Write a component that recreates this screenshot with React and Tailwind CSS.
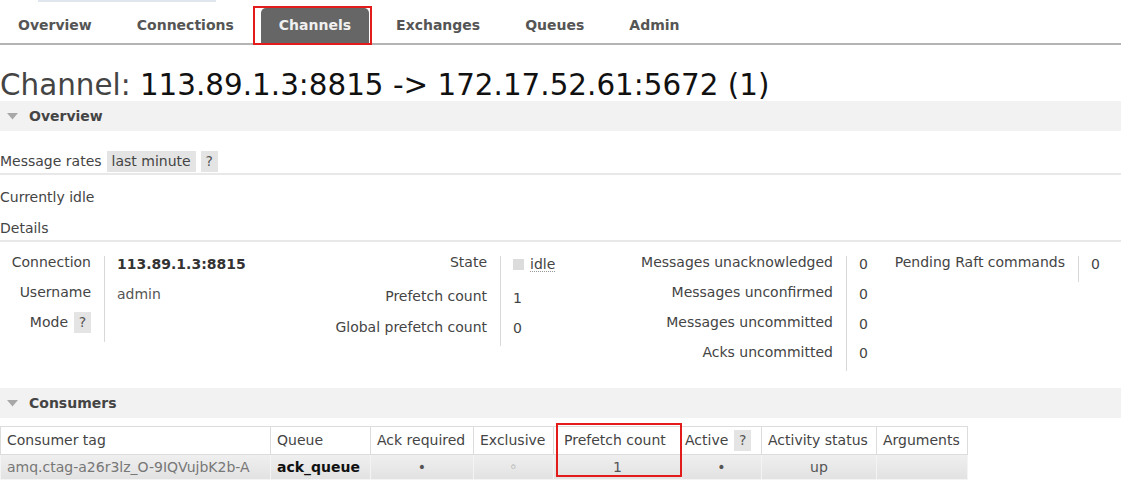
import React from "react";

function Triangle() {
  return (
    <svg width="11" height="7" viewBox="0 0 11 7" className="mr-[11px] ml-[7px]">
      <polygon points="0,0 11,0 5.5,6.5" fill="#a8a8a8" />
    </svg>
  );
}

function SectionHeader({ title }) {
  return (
    <div className="flex items-center h-[30px] bg-[#f2f2f2]">
      <Triangle />
      <span className="font-bold text-[14px] text-[#444]">{title}</span>
    </div>
  );
}

function Help({ className = "" }) {
  return (
    <span className={`inline-flex items-center justify-center bg-[#e4e4e4] text-[#555] w-[17px] h-[21px] ${className}`}>?</span>
  );
}

function Labels({ width, rows, gaps }) {
  return (
    <div className="flex flex-col items-end pr-[13px] pb-[14px] shrink-0" style={{ width }}>
      {rows.map((r, i) => (
        <div key={i} className="h-[12px] leading-[12px] flex items-center whitespace-nowrap" style={{ marginTop: i === 0 ? 0 : gaps[i - 1] }}>
          {r}
        </div>
      ))}
    </div>
  );
}

function Values({ width, rows, gaps }) {
  return (
    <div className="flex flex-col border-l border-[#d8d8d8] pl-[12px] pt-[2px] pb-[12px] shrink-0" style={{ width }}>
      {rows.map((r, i) => (
        <div key={i} className="h-[12px] leading-[12px] flex items-center whitespace-nowrap" style={{ marginTop: i === 0 ? 0 : gaps[i - 1] }}>
          {r}
        </div>
      ))}
    </div>
  );
}

export default function App() {
  const tabs = ["Overview", "Connections", "Channels", "Exchanges", "Queues", "Admin"];
  const th = "border border-[#dcdcdc] bg-white font-normal text-left px-[6px] h-[28px] whitespace-nowrap";
  const td = "border border-[#f4f4f4] px-[6px] h-[25px] whitespace-nowrap";

  return (
    <div className="w-[1121px] h-[481px] overflow-hidden bg-white text-[14px] text-[#444] font-['DejaVu_Sans',sans-serif]">
      <div className="h-[3px]">
        <div className="ml-[38px] w-[178px] h-[2px] bg-[#dfe6ee]" />
      </div>

      <ul className="flex gap-[9px] pt-[5px] border-b-2 border-[#b4b4b4]">
        {tabs.map((t) => (
          <li
            key={t}
            className={`relative h-[35px] px-[18px] flex items-center font-bold rounded-t-[5px] ${
              t === "Channels" ? "bg-[#666] text-[#f0f0f0]" : "text-[#555]"
            }`}
          >
            {t}
            {t === "Channels" && (
              <span className="absolute left-[-8px] right-[-3px] top-[-2px] bottom-[-2px] border-2 border-[#e41b1b]" />
            )}
          </li>
        ))}
      </ul>

      <h1 className="mt-[25px] leading-[31px] text-[29.4px] font-normal whitespace-nowrap">
        <span className="text-[#444]">Channel: </span>
        <span className="text-[#111]">113.89.1.3:8815 -&gt; 172.17.52.61:5672 (1)</span>
      </h1>

      <SectionHeader title="Overview" />

      <div className="pb-[2px] border-b-2 border-[#e8e8e8]">
        <div className="mt-[20px] h-[20px] flex items-center">
          <span className="mr-[5px]">Message rates</span>
          <span className="bg-[#e4e4e4] px-[5px] h-[21px] flex items-center">last minute</span>
          <Help className="ml-[5px]" />
        </div>
      </div>

      <div className="mt-[12px] leading-[20px]">Currently idle</div>
      <div className="mt-[11px] leading-[20px] pb-[2px] border-b-2 border-[#e8e8e8]">Details</div>

      <div className="flex items-start mt-[14px]">
        <Labels
          width={104}
          gaps={[18, 18]}
          rows={["Connection", "Username", <span className="flex items-center">Mode<Help className="ml-[6px]" /></span>]}
        />
        <Values
          width={226}
          gaps={[18, 18]}
          rows={[
            <span className="font-bold text-[#333]">113.89.1.3:8815</span>,
            <span className="text-[#555]">admin</span>,
            <span />,
          ]}
        />
        <Labels width={170} gaps={[22, 19]} rows={["State", "Prefetch count", "Global prefetch count"]} />
        <Values
          width={120}
          gaps={[22, 18]}
          rows={[
            <span className="flex items-center">
              <span className="w-[11px] h-[11px] bg-[#dcdcdc] mr-[6px]" />
              <span className="border-b border-dotted border-[#999] leading-[14px]">idle</span>
            </span>,
            "1",
            "0",
          ]}
        />
        <Labels
          width={226}
          gaps={[18, 18, 18]}
          rows={["Messages unacknowledged", "Messages unconfirmed", "Messages uncommitted", "Acks uncommitted"]}
        />
        <Values width={34} gaps={[18, 18, 17]} rows={["0", "0", "0", "0"]} />
        <Labels width={198} gaps={[]} rows={["Pending Raft commands"]} />
        <Values width={43} gaps={[]} rows={["0"]} />
      </div>

      <div className="mt-[16px]">
        <SectionHeader title="Consumers" />
      </div>

      <div className="relative mt-[8px]">
        <table className="border-collapse">
          <thead>
            <tr>
              <th className={`${th} w-[270px]`}>Consumer tag</th>
              <th className={`${th} w-[100px]`}>Queue</th>
              <th className={`${th} w-[103px]`}>Ack required</th>
              <th className={`${th} w-[80px]`}>Exclusive</th>
              <th className={`${th} w-[128px] pl-[10px]`}>Prefetch count</th>
              <th className={`${th} w-[80px] pl-[3px]`}>
                <span className="flex items-center">
                  Active
                  <Help className="ml-[6px]" />
                </span>
              </th>
              <th className={`${th} w-[115px]`}>Activity status</th>
              <th className={`${th} w-[91px]`}>Arguments</th>
            </tr>
          </thead>
          <tbody>
            <tr className="bg-gradient-to-b from-[#efefef] to-[#e2e2e2]">
              <td className={`${td} text-[#777]`}>amq.ctag-a26r3lz_O-9IQVujbK2b-A</td>
              <td className={`${td} font-bold text-[#111]`}>ack_queue</td>
              <td className={`${td} text-center text-[#555]`}>•</td>
              <td className={`${td} text-center text-[#888]`}>◦</td>
              <td className={`${td} text-center text-[#555]`}>1</td>
              <td className={`${td} text-center text-[#555]`}>•</td>
              <td className={`${td} text-center text-[#555]`}>up</td>
              <td className={td}></td>
            </tr>
          </tbody>
        </table>
        <span className="absolute left-[556px] top-[-3px] w-[126px] h-[54px] border-2 border-[#e41b1b]" />
      </div>
    </div>
  );
}
